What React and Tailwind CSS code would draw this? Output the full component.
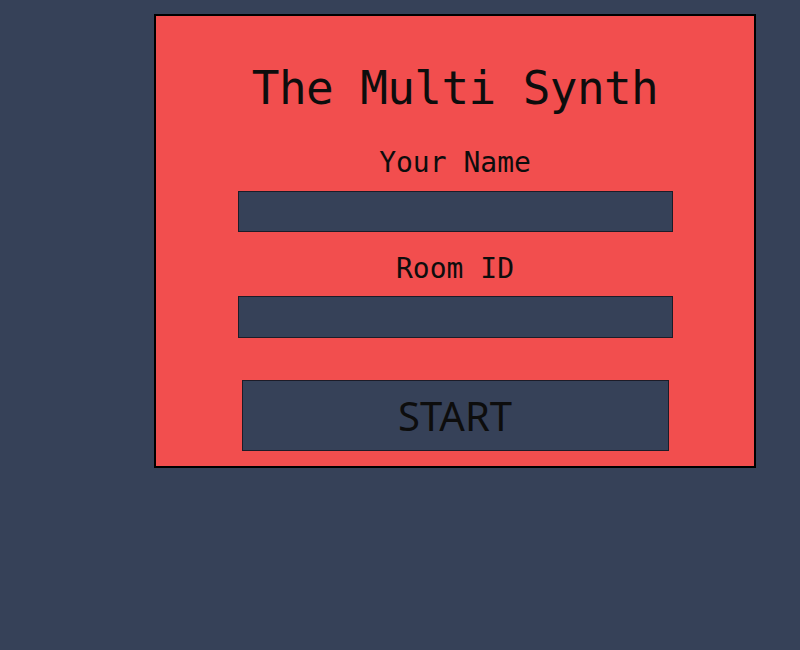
import React, { useState } from 'react';

const App = () => {
  const [name, setName] = useState('');
  const [room, setRoom] = useState('');

  return (
    <div className="min-h-[650px] w-full bg-[#364158] pt-[14px]">
      {/* Join card */}
      <div className="ml-[154px] w-[602px] h-[454px] border-2 border-black bg-[#f24e4e] flex flex-col items-center pt-[46px] font-['DejaVu_Sans_Mono',monospace] text-[#0d0d0d]">
        <h1 className="text-[46px] leading-[52px] tracking-[-0.6px]">The Multi Synth</h1>

        <label htmlFor="name" className="mt-[32px] text-[28px] leading-[33px]">Your Name</label>
        <input
          id="name"
          value={name}
          onChange={(e) => setName(e.target.value)}
          className="mt-[12px] w-[435px] h-[41px] border border-[#1c1c28] bg-[#364158] px-2 text-white outline-none"
        />

        <label htmlFor="room" className="mt-[20px] text-[28px] leading-[33px]">Room ID</label>
        <input
          id="room"
          value={room}
          onChange={(e) => setRoom(e.target.value)}
          className="mt-[11px] w-[435px] h-[42px] border border-[#1c1c28] bg-[#364158] px-2 text-white outline-none"
        />

        <button className="mt-[42px] w-[427px] h-[71px] border border-[#1c1c28] bg-[#364158] font-['Noto_Sans',sans-serif] text-[40px] leading-none text-[#0d0d0d]">
          START
        </button>
      </div>
    </div>
  );
};

export default App;
